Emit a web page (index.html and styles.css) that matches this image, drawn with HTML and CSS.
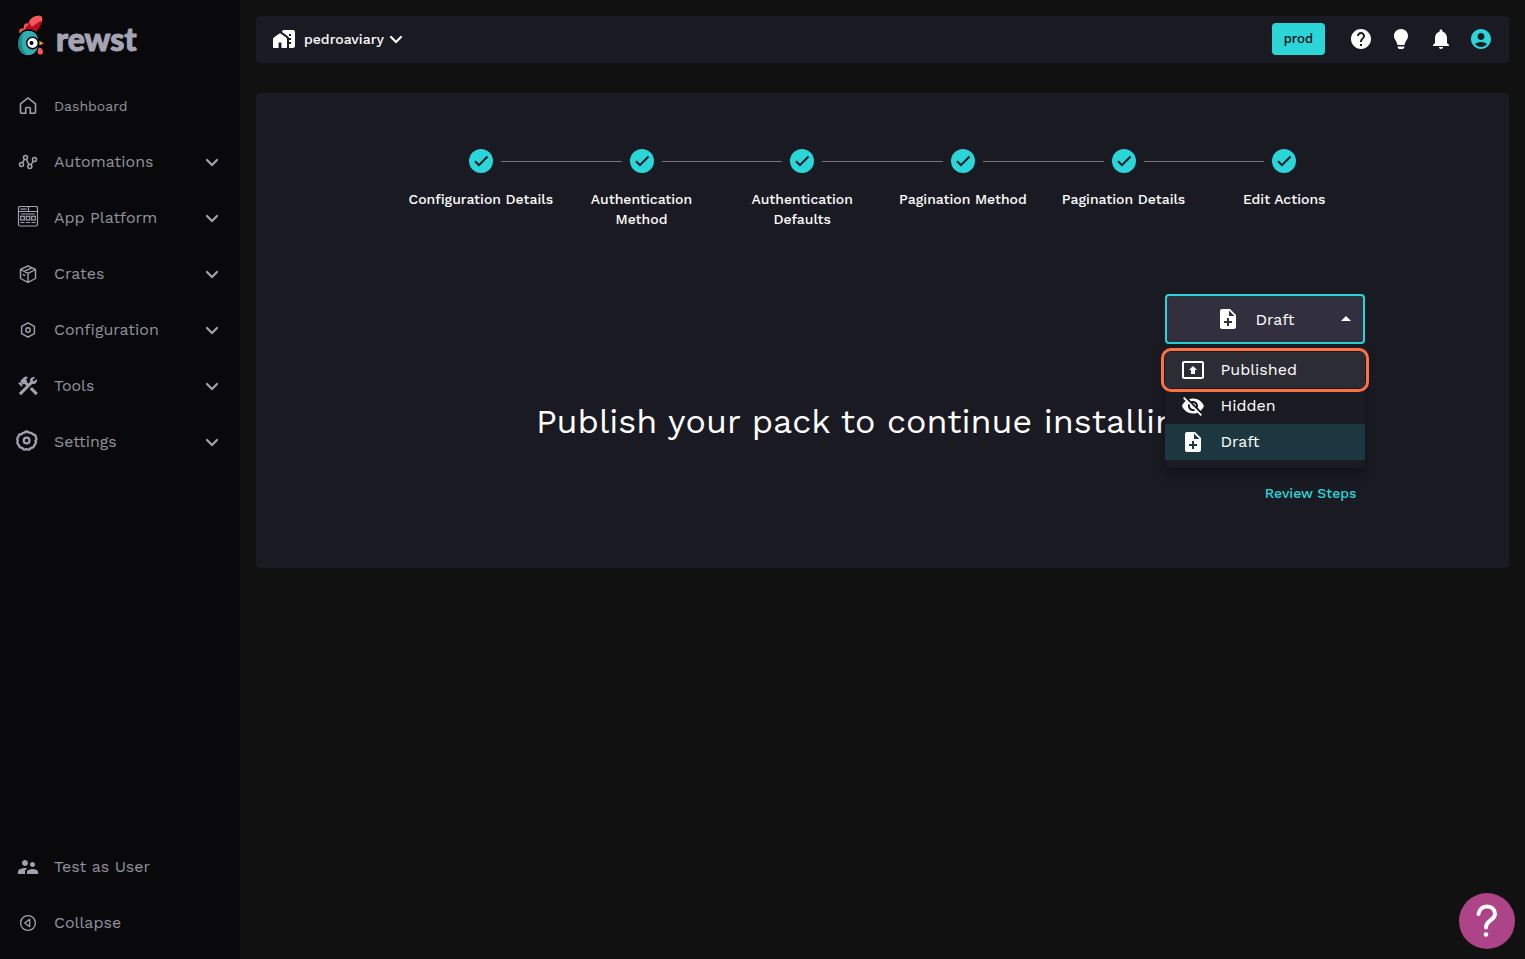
FILE: index.html
```html
<!DOCTYPE html>
<html lang="en">
<head>
<meta charset="utf-8">
<title>Rewst</title>
<link rel="stylesheet" href="styles.css">
</head>
<body>
<svg class="sprite" aria-hidden="true">
  <symbol id="chevron" viewBox="0 0 24 24"><path d="M7 10l5 5 5-5" fill="none" stroke="currentColor" stroke-width="2.2" stroke-linecap="round"/></symbol>
  <symbol id="check" viewBox="0 0 24 24"><circle cx="12" cy="12" r="12" fill="#2bd5d8"/><path d="M6 12.2l4 4 8.5-8.7" fill="none" stroke="#1a1a23" stroke-width="2"/></symbol>
  <symbol id="note" viewBox="0 0 24 24"><path d="M14 2H6c-1.1 0-1.99.9-1.99 2L4 20c0 1.1.89 2 1.99 2H18c1.1 0 2-.9 2-2V8l-6-6zm2 14h-3v3h-2v-3H8v-2h3v-3h2v3h3v2zm-3-7V3.5L18.5 9H13z"/></symbol>
</svg>
<div class="app">
  <aside class="sidebar">
    <a class="brand" href="#">
      <svg class="rooster" viewBox="0 0 30 44" aria-hidden="true">
        <path d="M3 20c-1-4 0-7 4-6 0-4 2-6 5-5 1-5 6-8 11-8 5 0 5 5 2 10-2 4-4 6-7 7z" fill="#f5575b" stroke="#000" stroke-width="1.2"/>
        <path d="M9 16c1-4 3-6 6-7-1 2 0 4 2 3 3-2 5-4 8-5 1 4-3 9-6 12z" fill="#b80f20"/>
        <path d="M12 16c8 0 11 6 11 13 0 8-5 13-11 13-7 0-10.500-6-10.500-12 0-8 4-14 10.500-14z" fill="#31aeb2" stroke="#000" stroke-width="1.400"/>
        <path d="M8 18c-3 5-4 17 3 23-6-1-8.700-6-8.700-11C2.300 24 4.500 20 8 18z" fill="#23858d"/>
        <path d="M23 33c3 0 4.500 3 4.500 5 0 3.500-4.500 4-6 1.500-1-2-.5-4.500 1.500-6.500z" fill="#f5575b" stroke="#000"/>
        <path d="M23 26l5.500 3.500L23 32z" fill="#f5a314" stroke="#000" stroke-width=".8"/>
        <circle cx="16.500" cy="29" r="5.800" fill="#fff" stroke="#000" stroke-width="1.400"/>
        <circle cx="15.500" cy="29" r="2" fill="#000"/>
      </svg>
      <span class="wordmark">rewst</span>
    </a>
    <nav class="menu">
      <a class="item small" href="#"><svg viewBox="0 0 24 24" class="line"><path d="M9.700 19.200H5.500c-.6 0-1-.4-1-1V10L12 4l7.500 6v8.200c0 .6-.4 1-1 1h-4.200v-4.700c0-.6-.4-1-1-1h-2.600c-.6 0-1 .4-1 1z" stroke-width="1.600"/></svg><span>Dashboard</span></a>
      <button class="item"><svg viewBox="0 0 24 24" class="line"><g stroke-width="1.500"><circle cx="5.500" cy="14.500" r="2"/><circle cx="9.500" cy="7.500" r="2"/><circle cx="13.800" cy="16.500" r="2"/><circle cx="18.500" cy="9.500" r="2"/><path d="M6.500 12.700l2-3.400M10.300 9.400l2.700 5.200M14.800 14.700l2.600-3.500"/></g></svg><span>Automations</span><svg class="chev"><use href="#chevron"/></svg></button>
      <button class="item"><svg viewBox="0 0 24 24" class="line"><g stroke-width="1.200"><rect x="2.500" y=".5" width="19" height="19.500" rx="1.500"/><path d="M2.500 5.500h19M4.500 3.200h6M12.500 .5v5M5 8h14M4.500 16.500h4M10 16.500h4M15.500 16.500h4"/><rect x="4.700" y="10.300" width="3.600" height="3.700"/><rect x="10.200" y="10.300" width="3.600" height="3.700"/><rect x="15.700" y="10.300" width="3.600" height="3.700"/></g></svg><span>App Platform</span><svg class="chev"><use href="#chevron"/></svg></button>
      <button class="item"><svg viewBox="0 0 24 24" class="line"><g stroke-width="1.400" stroke-linejoin="round"><path d="M12 3.800l7.500 3.700v9L12 20.300l-7.500-3.800v-9zM4.500 7.500L12 11.300l7.500-3.800M12 11.300v9M15.800 5.800L8.300 9.400M6.600 12.300l2.600 1.300"/></g></svg><span>Crates</span><svg class="chev"><use href="#chevron"/></svg></button>
      <button class="item"><svg viewBox="0 0 24 24" class="line"><g stroke-width="1.400"><path d="M12 4.800l6.400 3.600v7.200L12 19.200l-6.400-3.600V8.400z"/><circle cx="12" cy="12" r="2.200"/></g></svg><span>Configuration</span><svg class="chev"><use href="#chevron"/></svg></button>
      <button class="item"><svg viewBox="0 0 24 24"><path d="M13.780 15.170l2.120-2.120 6 6-2.120 2.120zM17.500 10c1.930 0 3.500-1.570 3.500-3.500 0-.58-.16-1.120-.41-1.600l-2.700 2.700-1.490-1.490 2.700-2.700c-.48-.25-1.020-.41-1.600-.41C15.570 3 14 4.570 14 6.500c0 .41.08.8.21 1.160l-1.850 1.850-1.780-1.780.71-.71-1.410-1.410L12 3.490c-1.170-1.170-3.070-1.170-4.240 0L4.220 7.030l1.410 1.410H2.810l-.71.71 3.540 3.540.71-.71V9.150l1.410 1.410.71-.71 1.780 1.780-7.410 7.410 2.120 2.120L16.340 9.790c.36.13.75.21 1.160.21z"/></svg><span>Tools</span><svg class="chev"><use href="#chevron"/></svg></button>
      <button class="item"><svg viewBox="0 0 24 24" class="line"><path d="M8.500 2.600Q10.600 .4 12.700 2.600Q15.800 2.300 16.900 4.400Q19.900 4.500 19.800 7.300Q21.200 9.600 19.400 10.700Q20.600 13.300 18.600 14.800Q17.800 18.100 14.900 17.900Q13.200 20.700 10.600 19.100Q8 20.700 6.300 17.900Q3.400 18.100 2.600 14.800Q.6 13.300 1.800 10.700Q.6 8 2.400 6.800Q2.600 3.800 5.600 4.300Q6.600 2.500 8.500 2.600z" stroke-width="2.300" stroke-linejoin="round"/><circle cx="10.600" cy="10.600" r="2.900" stroke-width="2.200"/></svg><span>Settings</span><svg class="chev"><use href="#chevron"/></svg></button>
    </nav>
    <div class="menu">
      <button class="item"><svg viewBox="0 0 24 24"><path d="M16.500 12c1.380 0 2.490-1.120 2.490-2.500S17.880 7 16.500 7 14 8.120 14 9.500s1.120 2.500 2.500 2.500zM9 11c1.660 0 2.990-1.340 2.990-3S10.660 5 9 5 6 6.340 6 8s1.340 3 3 3zm7.500 3c-1.830 0-5.500.92-5.500 2.750V19h11v-2.250c0-1.830-3.670-2.750-5.500-2.750zM9 13c-2.330 0-7 1.170-7 3.500V19h7v-2.250c0-.85.33-2.340 2.370-3.470C10.500 13.100 9.660 13 9 13z"/></svg><span>Test as User</span></button>
      <button class="item"><svg viewBox="0 0 24 24" class="line"><g stroke-width="1.300"><circle cx="12" cy="12" r="7.400"/><path d="M13.700 8.400v7.200L8.700 12z" stroke-linejoin="round"/></g></svg><span>Collapse</span></button>
    </div>
  </aside>

  <main class="main">
    <header class="topbar">
      <button class="org">
        <svg viewBox="0 0 24 24"><path d="M8.600 6.600c-.4-.3-.8-.3-1.200 0L1.900 10.500c-.6.400-.9 1-.9 1.600V20c0 .6.400 1 1 1h4c.3 0 .6-.3.600-.6V15.500h2.800v4.900c0 .3.300.6.600.6h4c.6 0 1-.4 1-1v-7.900c0-.6-.3-1.200-.9-1.600z"/><path fill-rule="evenodd" d="M21 3h-9c-1.100 0-2 .9-2 2v.1l5.800 4.200c.8.600 1.200 1.400 1.200 2.300V21h4c1.100 0 2-.9 2-2V5c0-1.100-.9-2-2-2zM17 7h2v2h-2zM17 11h2v2h-2zM17 15h2v2h-2z"/></svg>
        <span>pedroaviary</span>
        <svg class="chev"><use href="#chevron"/></svg>
      </button>
      <div class="actions">
        <button class="env">prod</button>
        <button class="icon" aria-label="Help"><svg viewBox="0 0 24 24"><path d="M12 2C6.480 2 2 6.480 2 12s4.480 10 10 10 10-4.480 10-10S17.520 2 12 2zm1 17h-2v-2h2v2zm2.070-7.750l-.9.920C13.450 12.900 13 13.500 13 15h-2v-.5c0-1.100.45-2.100 1.170-2.830l1.240-1.260c.37-.36.59-.86.59-1.410 0-1.100-.9-2-2-2s-2 .9-2 2H8c0-2.210 1.790-4 4-4s4 1.790 4 4c0 .88-.36 1.680-.93 2.250z"/></svg></button>
        <button class="icon" aria-label="Tips"><svg viewBox="0 0 24 24"><path d="M12 2C7.900 2 5 5 5 9c0 3.400 2.600 4.600 3.500 9h7c.9-4.400 3.500-5.600 3.500-9 0-4-2.900-7-7-7zM8.500 19.500h7v1H15c-.2.900-.6 1.500-1.500 1.500h-3c-.9 0-1.300-.6-1.500-1.500h-.5z"/></svg></button>
        <button class="icon" aria-label="Notifications"><svg viewBox="0 0 24 24"><path d="M12 22c1.100 0 2-.9 2-2h-4c0 1.100.89 2 2 2zm6-6v-5c0-3.070-1.640-5.640-4.500-6.320V4c0-.83-.67-1.500-1.500-1.500s-1.500.67-1.500 1.500v.68C7.630 5.360 6 7.920 6 11v5l-2 2v1h16v-1l-2-2z"/></svg></button>
        <button class="icon accent" aria-label="Account"><svg viewBox="0 0 24 24"><path d="M12 2C6.480 2 2 6.480 2 12s4.480 10 10 10 10-4.480 10-10S17.520 2 12 2zm0 4c1.930 0 3.500 1.570 3.500 3.500S13.930 13 12 13s-3.500-1.570-3.500-3.500S10.070 6 12 6zm0 14c-2.030 0-4.430-.82-6.140-2.880C7.550 15.800 9.680 15 12 15s4.450.8 6.140 2.120C16.430 19.180 14.030 20 12 20z"/></svg></button>
      </div>
    </header>

    <section class="panel">
      <ol class="stepper">
        <li><div class="mark"><svg><use href="#check"/></svg></div><span>Configuration Details</span></li>
        <li><div class="mark"><svg><use href="#check"/></svg></div><span>Authentication Method</span></li>
        <li><div class="mark"><svg><use href="#check"/></svg></div><span>Authentication Defaults</span></li>
        <li><div class="mark"><svg><use href="#check"/></svg></div><span>Pagination Method</span></li>
        <li><div class="mark"><svg><use href="#check"/></svg></div><span>Pagination Details</span></li>
        <li><div class="mark"><svg><use href="#check"/></svg></div><span>Edit Actions</span></li>
      </ol>
      <div class="status">
        <div class="field">
          <select aria-label="Pack status"><option>Draft</option></select>
          <svg class="lead"><use href="#note"/></svg>
          <svg class="arrow" viewBox="0 0 24 24"><path d="M7 14l5-5 5 5z"/></svg>
        </div>
        <ul class="options" role="listbox" aria-label="Pack status options">
          <li class="hover" role="option"><svg viewBox="0 0 24 24"><path d="M21 3H3c-1.110 0-2 .89-2 2v14c0 1.110.89 2 2 2h18c1.110 0 2-.89 2-2V5c0-1.110-.89-2-2-2zm0 16.020H3V4.980h18v14.040zM10 12H8l4-4 4 4h-2v4h-4v-4z"/></svg><span>Published</span></li>
          <li role="option"><svg viewBox="0 0 24 24"><path d="M12 7c2.760 0 5 2.240 5 5 0 .65-.13 1.260-.36 1.830l2.920 2.920c1.510-1.260 2.700-2.890 3.430-4.750-1.730-4.390-6-7.500-11-7.500-1.400 0-2.740.25-3.980.7l2.160 2.160C10.740 7.130 11.350 7 12 7zM2 4.270l2.280 2.280.46.46C3.080 8.300 1.780 10.020 1 12c1.730 4.390 6 7.500 11 7.500 1.550 0 3.030-.3 4.380-.84l.42.42L19.730 22 21 20.730 3.270 3 2 4.270zM7.530 9.800l1.550 1.550c-.05.21-.08.43-.08.65 0 1.660 1.340 3 3 3 .22 0 .44-.03.65-.08l1.550 1.550c-.67.33-1.410.53-2.200.53-2.760 0-5-2.240-5-5 0-.79.2-1.530.53-2.200zm4.310-.78l3.150 3.150.02-.16c0-1.660-1.340-3-3-3l-.17.010z"/></svg><span>Hidden</span></li>
          <li class="selected" role="option" aria-selected="true"><svg><use href="#note"/></svg><span>Draft</span></li>
        </ul>
      </div>
      <h1 class="title">Publish your pack to continue installing it</h1>
      <div class="footer"><button class="review">Review Steps</button></div>
    </section>
  </main>
</div>
<button class="fab" aria-label="Support"><svg viewBox="0 0 56 56"><path d="M19.500 21c1-5.500 5-7.500 8.500-7.500 5 0 8 3.500 8 7.500 0 6.500-9 6-9 13.500" fill="none" stroke="#fff" stroke-width="4" stroke-linecap="round"/><circle cx="27" cy="41.500" r="2.300" fill="#fff"/></svg></button>
</body>
</html>
```
FILE: styles.css
```css
* { box-sizing: border-box; }

body {
  margin: 0;
  background: #111111;
  color: #ffffff;
  font-family: "Work Sans", Inter, sans-serif;
  font-size: 16px;
}

button, select { font: inherit; color: inherit; background: none; border: 0; padding: 0; }
a { color: inherit; text-decoration: none; }
ol, ul { list-style: none; margin: 0; padding: 0; }
svg { width: 24px; height: 24px; fill: currentColor; flex: none; display: block; }
.sprite { position: absolute; width: 0; height: 0; }
.line { fill: none; stroke: currentColor; }

.app { display: flex; min-height: 100vh; }

.sidebar {
  display: flex;
  flex-direction: column;
  flex: none;
  width: 240px;
  padding: 14px 0 8px;
  background: #09090b;
  color: #a1a1b0;
}

.brand { display: flex; align-items: center; gap: 10px; height: 44px; margin-bottom: 20px; padding-left: 16px; }
.rooster { width: 30px; height: 44px; }
.wordmark {
  padding-top: 6px;
  color: #a4a4b5;
  font-family: Lato, sans-serif;
  font-weight: 900;
  font-size: 32px;
  line-height: 38px;
  -webkit-text-stroke: 1px #a4a4b5;
}

.menu { display: flex; flex-direction: column; }
.menu:last-child { margin-top: auto; }
.item { display: flex; align-items: center; gap: 14px; height: 56px; padding: 0 16px; text-align: left; }
.item span { flex: 1; padding-bottom: 2px; color: #92929f; }
.small { font-size: 14px; }
.small span { padding-bottom: 0; }

.main { flex: 1; min-width: 0; padding: 16px; }

.topbar {
  display: flex;
  align-items: center;
  justify-content: space-between;
  height: 47px;
  margin-bottom: 30px;
  padding: 0 16px 1px;
  border-radius: 4px;
  background: #1a1a23;
}
.org { display: flex; align-items: center; font-size: 14px; font-weight: 500; }
.org span { margin-left: 8px; }
.actions { display: flex; align-items: center; gap: 16px; }
.env {
  height: 32px;
  margin-right: 8px;
  padding: 0 12px 2px;
  border-radius: 4px;
  background: #2bd5d8;
  color: #09090b;
  font-family: "Noto Sans", sans-serif;
  font-size: 13px;
  font-weight: 500;
}
.accent { color: #2bd5d8; }

.panel { padding: 56px 24px; border-radius: 4px; background: #1a1a23; }
.stepper, .status, .footer { width: 80%; margin: 0 auto; }

.stepper { display: flex; }
.stepper li { flex: 1; text-align: center; font-size: 14px; font-weight: 500; line-height: 20px; }
.stepper span { display: block; padding: 0 8px; }
.mark { display: flex; align-items: center; gap: 8px; margin-bottom: 16px; }
.mark::before, .mark::after { content: ""; flex: 1; height: 1px; background: #75757a; }
.stepper li:first-child .mark::before, .stepper li:last-child .mark::after { background: none; }

.status { position: relative; display: flex; justify-content: flex-end; padding-top: 65px; }
.field { display: grid; align-items: center; width: 200px; height: 50px; }
.field > * { grid-area: 1 / 1; }
.field select {
  appearance: none;
  width: 100%;
  height: 50px;
  padding-left: 89px;
  border: 2px solid #2bd5d8;
  border-radius: 4px;
  background: #32303e;
}
.lead { margin-left: 51px; pointer-events: none; }
.arrow { justify-self: end; margin-right: 7px; pointer-events: none; }

.options {
  position: absolute;
  top: 100%;
  right: 0;
  z-index: 1;
  width: 200px;
  padding: 8px 0;
  border-radius: 4px;
  background: #1a1a23;
  box-shadow: 0 5px 10px rgba(0, 0, 0, 0.35);
}
.options li { position: relative; display: flex; align-items: center; gap: 16px; height: 36px; padding: 0 16px; }
.options span { padding-bottom: 2px; }
.options .hover { background: #2c2c35; }
.options .selected { background: #1d3740; }
.options .hover::after {
  content: "";
  position: absolute;
  inset: -4px;
  border: 3px solid #ff7043;
  border-radius: 10px;
}

.title { margin: 56px 0 32px; text-align: center; font-size: 34px; font-weight: 400; line-height: 42px; }
.footer { display: flex; justify-content: flex-end; }
.review { height: 38px; padding: 0 8px; color: #2bd5d8; font-size: 14px; font-weight: 500; }

.fab { position: fixed; right: 10px; bottom: 10px; width: 56px; height: 56px; border-radius: 50%; background: #ad4488; }
.fab svg { width: 56px; height: 56px; }
```
